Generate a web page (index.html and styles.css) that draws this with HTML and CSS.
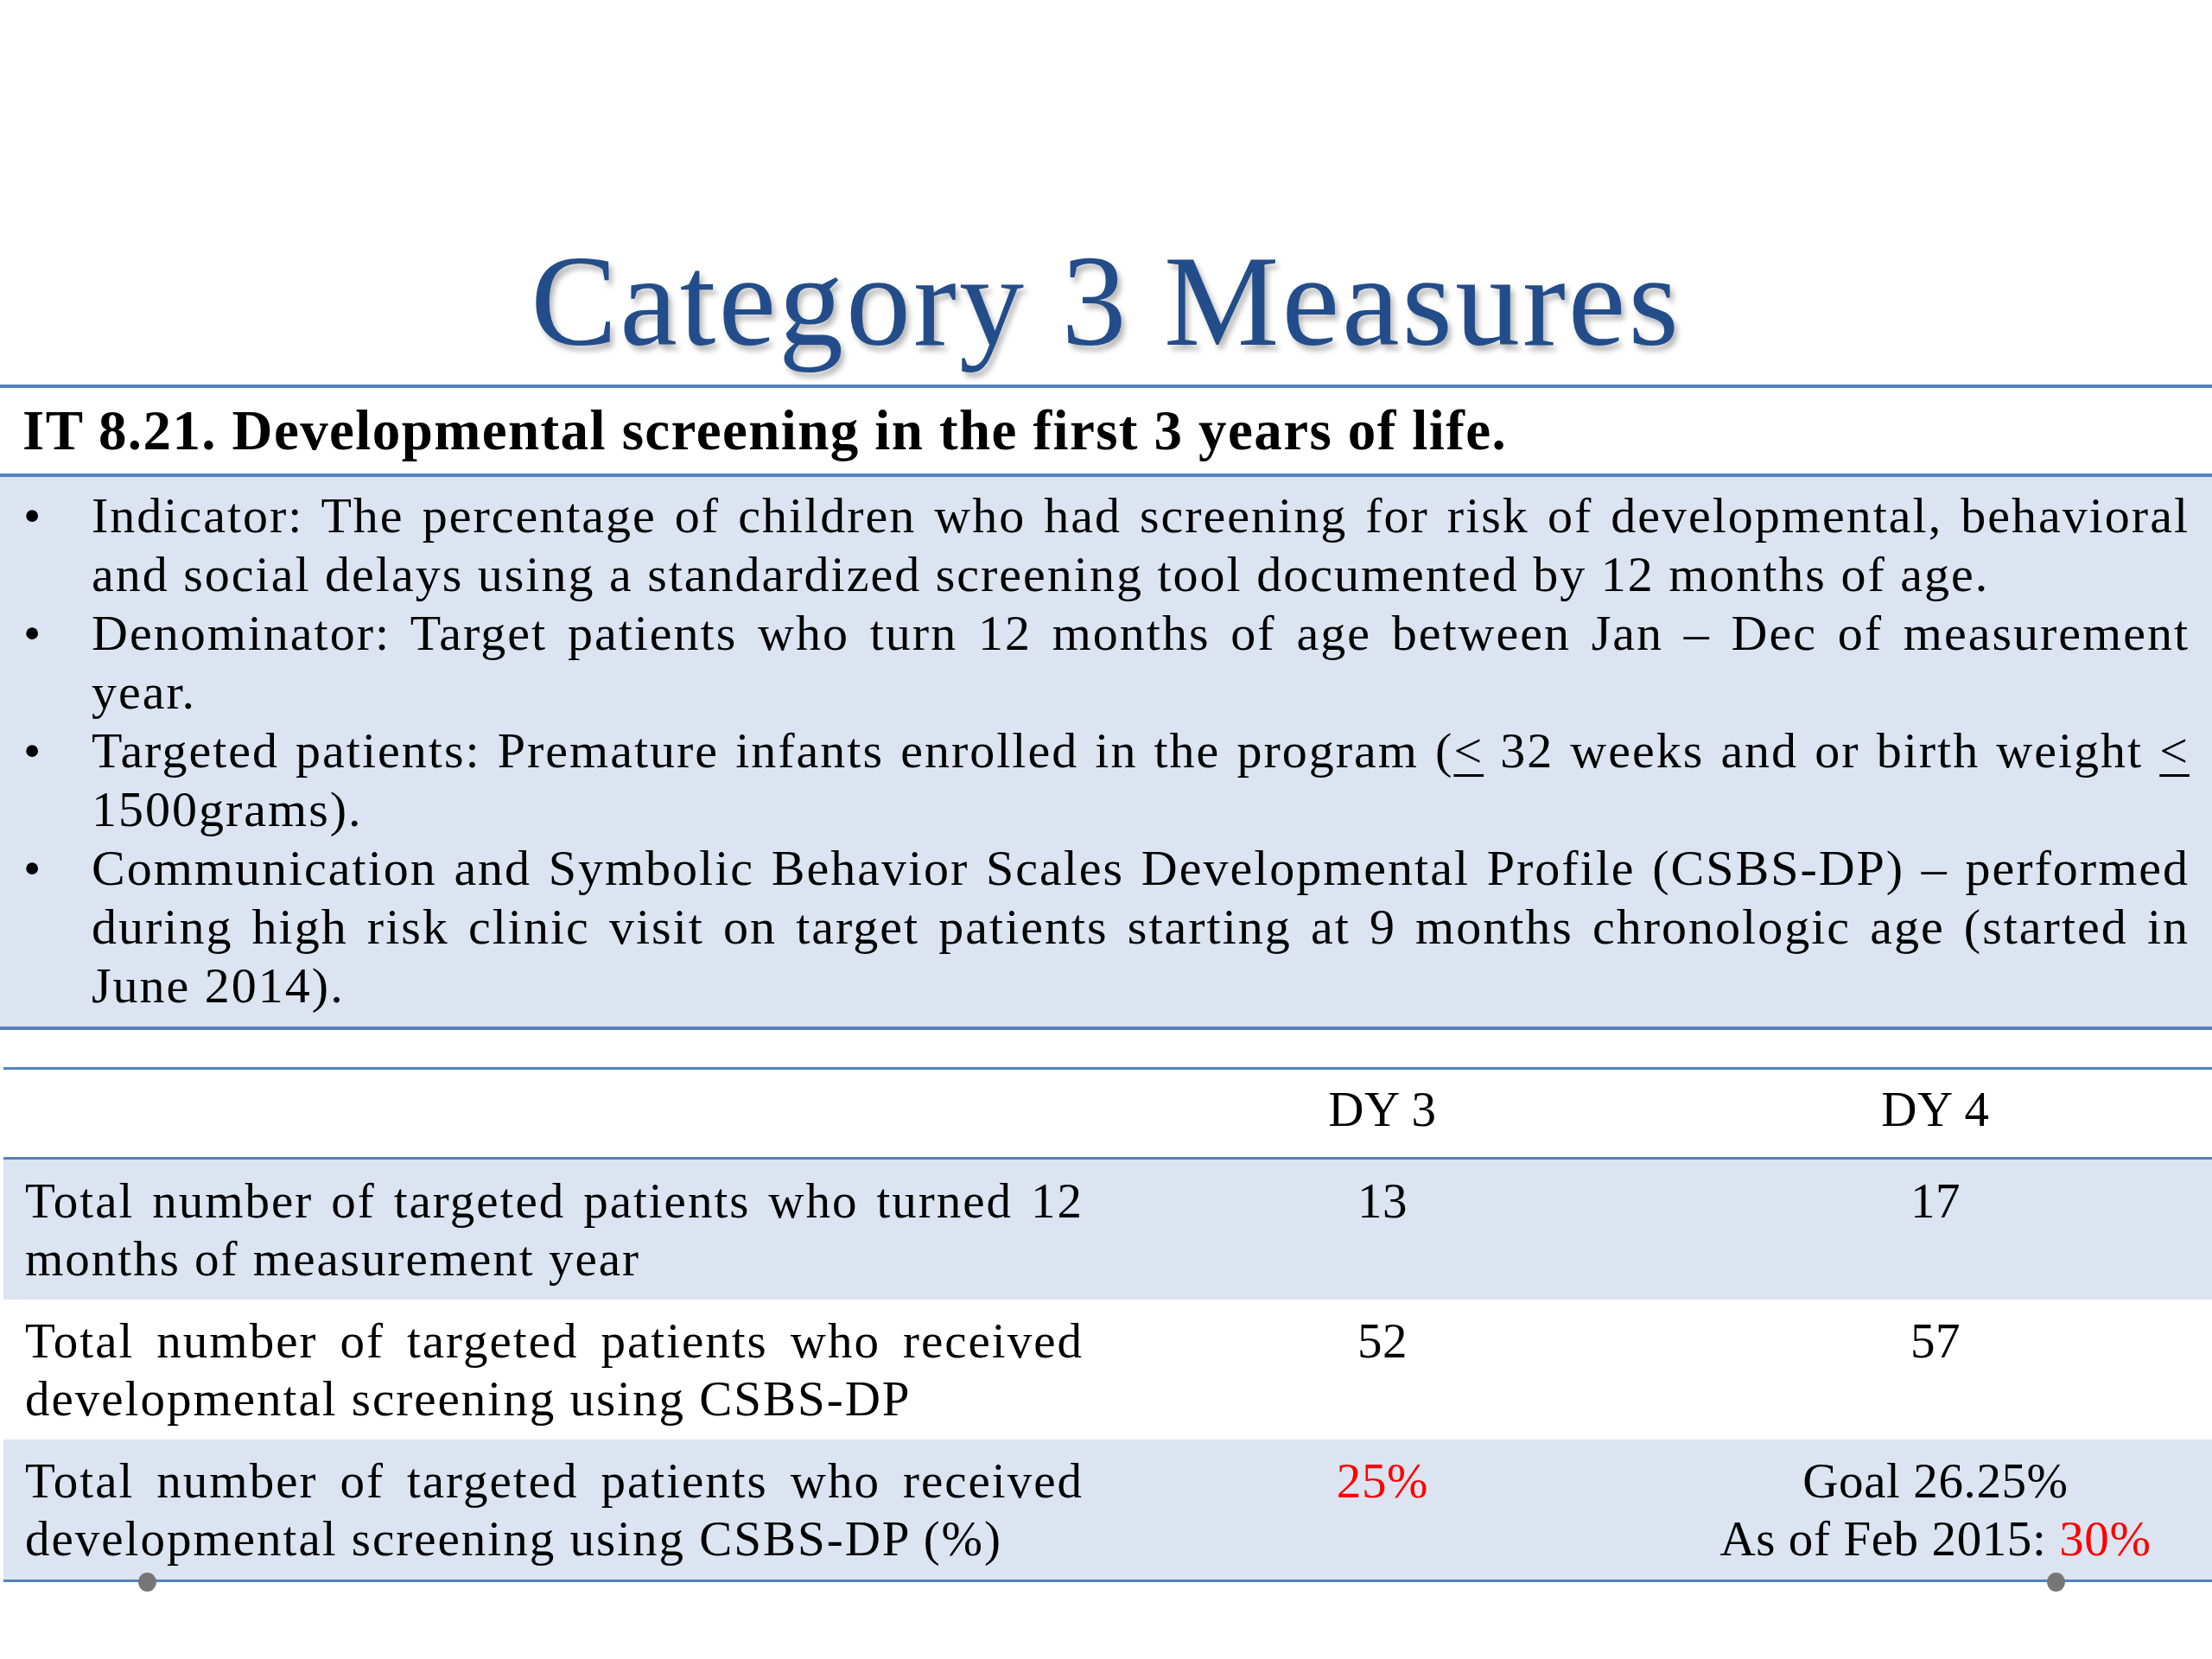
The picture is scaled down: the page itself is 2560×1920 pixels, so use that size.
FILE: index.html
```html
<!DOCTYPE html>
<html lang="en">
<head>
<meta charset="utf-8">
<title>Category 3 Measures</title>
<link rel="stylesheet" href="styles.css">
</head>
<body>
<div class="slide">
  <h1 class="title">Category 3 Measures</h1>

  <section class="measure">
    <h2 class="heading">IT 8.21. Developmental screening in the first 3 years of life.</h2>
    <ul class="bullets">
      <li class="item">
        <span class="dot">•</span>
        <p class="text">
          <span class="jl">Indicator: The percentage of children who had screening for risk of developmental, behavioral</span>
          <span class="ll">and social delays using a standardized screening tool documented by 12 months of age.</span>
        </p>
      </li>
      <li class="item">
        <span class="dot">•</span>
        <p class="text">
          <span class="jl">Denominator: Target patients who turn 12 months of age between Jan – Dec of measurement</span>
          <span class="ll">year.</span>
        </p>
      </li>
      <li class="item">
        <span class="dot">•</span>
        <p class="text">
          <span class="jl">Targeted patients: Premature infants enrolled in the program (<span class="u">&lt;</span> 32 weeks and or birth weight <span class="u">&lt;</span></span>
          <span class="ll">1500grams).</span>
        </p>
      </li>
      <li class="item">
        <span class="dot">•</span>
        <p class="text">
          <span class="jl">Communication and Symbolic Behavior Scales Developmental Profile (CSBS-DP) – performed</span>
          <span class="jl">during high risk clinic visit on target patients starting at 9 months chronologic age (started in</span>
          <span class="ll">June 2014).</span>
        </p>
      </li>
    </ul>
  </section>

  <section class="results">
    <div class="row head">
      <div class="cell label"></div>
      <div class="cell val">DY 3</div>
      <div class="cell val">DY 4</div>
    </div>
    <div class="row shaded">
      <div class="cell label">
        <span class="jl">Total number of targeted patients who turned 12</span>
        <span class="ll">months of measurement year</span>
      </div>
      <div class="cell val">13</div>
      <div class="cell val">17</div>
    </div>
    <div class="row">
      <div class="cell label">
        <span class="jl">Total number of targeted patients who received</span>
        <span class="ll">developmental screening using CSBS-DP</span>
      </div>
      <div class="cell val">52</div>
      <div class="cell val">57</div>
    </div>
    <div class="row shaded last">
      <div class="cell label">
        <span class="jl">Total number of targeted patients who received</span>
        <span class="ll">developmental screening using CSBS-DP (%)</span>
      </div>
      <div class="cell val"><span class="red">25%</span></div>
      <div class="cell val">Goal 26.25%<br>As of Feb 2015: <span class="red">30%</span></div>
    </div>
    <span class="handle handle-left"></span>
    <span class="handle handle-right"></span>
  </section>
</div>
</body>
</html>
```

FILE: styles.css
```css
html, body {
  margin: 0;
  padding: 0;
  background: #ffffff;
}

body {
  font-family: "Liberation Serif", "Times New Roman", serif;
  color: #000000;
}

.slide {
  width: 2560px;
  height: 1920px;
  position: relative;
  overflow: hidden;
}

.title {
  margin: 0;
  padding: 258px 0 7px;
  height: 180px;
  line-height: 180px;
  font-size: 150px;
  font-weight: normal;
  text-align: center;
  color: #234d8a;
  letter-spacing: 3px;
  text-shadow: 4px 6px 6px rgba(0, 0, 0, 0.28);
}

.measure {
  border-top: 4px solid #5482bf;
  border-bottom: 4px solid #5482bf;
}

.heading {
  margin: 0;
  height: 99px;
  line-height: 99px;
  padding-left: 26px;
  font-size: 65px;
  font-weight: bold;
  letter-spacing: 1.4px;
  border-bottom: 4px solid #5482bf;
}

.bullets {
  list-style: none;
  margin: 0;
  padding: 11px 26px 13px 0;
  background: #dbe4f0;
  font-size: 58px;
  line-height: 68px;
  letter-spacing: 2px;
}

.item {
  display: grid;
  grid-template-columns: 106px 1fr;
}

.dot {
  padding-left: 27px;
}

.text {
  margin: 0;
  text-align: justify;
}

.jl {
  display: block;
  text-align: justify;
  text-align-last: justify;
}

.ll {
  display: block;
  text-align: left;
}

.u {
  text-decoration: underline;
  text-underline-offset: 8px;
  text-decoration-thickness: 3px;
}

.results {
  position: relative;
  margin-top: 43px;
  margin-left: 4px;
  border-top: 3px solid #5482bf;
  border-bottom: 3px solid #5482bf;
  font-size: 57px;
  line-height: 67px;
}

.row {
  display: grid;
  grid-template-columns: 1276px 640px 640px;
  height: 162px;
  box-sizing: border-box;
  padding: 14px 0 0;
}

.row.head {
  height: 104px;
  padding-top: 12px;
  border-bottom: 3px solid #5482bf;
}

.row.shaded {
  background: #dbe4f0;
}

.label {
  padding: 0 26px 0 25px;
  letter-spacing: 2px;
}

.val {
  text-align: center;
  letter-spacing: 0.6px;
}

.red {
  color: #ff0000;
}

.handle {
  position: absolute;
  width: 21px;
  height: 22px;
  border-radius: 50%;
  background: #767676;
  bottom: -14px;
}

.handle-left {
  left: 156px;
}

.handle-right {
  left: 2365px;
}
```
